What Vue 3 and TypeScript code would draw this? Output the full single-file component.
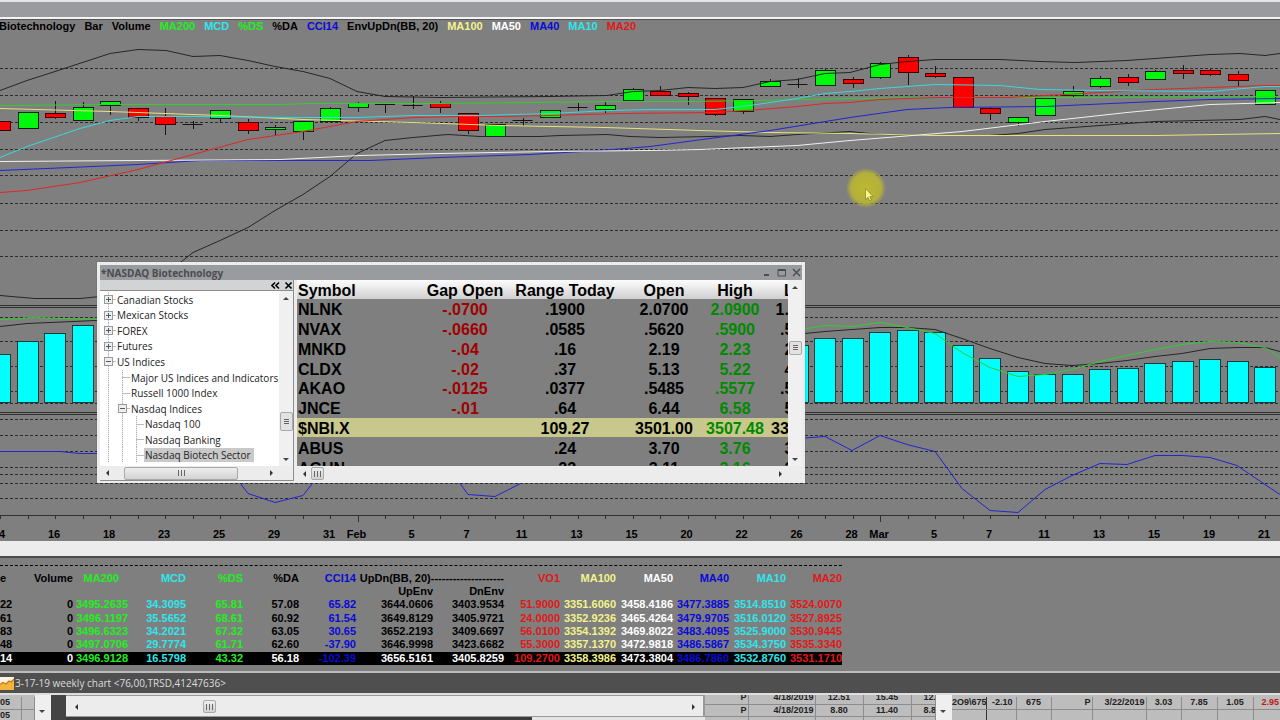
<script setup lang="ts">
import { ref } from 'vue'

type Tone = 'k' | 'g' | 'c' | 'b' | 'y' | 'w' | 'r'
type Points = [number, number][]

const STEP = 27.5

const legend: { text: string; tone: Tone }[] = [
  { text: 'Biotechnology', tone: 'k' },
  { text: 'Bar', tone: 'k' },
  { text: 'Volume', tone: 'k' },
  { text: 'MA200', tone: 'g' },
  { text: 'MCD', tone: 'c' },
  { text: '%DS', tone: 'g' },
  { text: '%DA', tone: 'k' },
  { text: 'CCI14', tone: 'b' },
  { text: 'EnvUpDn(BB, 20)', tone: 'k' },
  { text: 'MA100', tone: 'y' },
  { text: 'MA50', tone: 'w' },
  { text: 'MA40', tone: 'b' },
  { text: 'MA10', tone: 'c' },
  { text: 'MA20', tone: 'r' },
]

const grid = [68, 95, 122, 149, 175, 203, 230, 256, 317, 341, 366, 391, 403, 419, 435, 451, 467, 474, 483, 498]
const separators = [305, 307, 412, 414, 515]

// kind, body top, body bottom, wick top, wick bottom
type Candle = ['g' | 'r' | 'd', number, number, number, number]
const candles: Candle[] = [
  ['r', 121, 130, 121, 130], ['g', 112, 128, 112, 129], ['r', 113, 117, 101, 119],
  ['g', 107, 120, 102, 120], ['g', 101, 105, 101, 115], ['r', 108, 117, 108, 121],
  ['r', 116, 124, 108, 135], ['d', 124, 124, 121, 129], ['g', 110, 118, 110, 123],
  ['r', 122, 130, 119, 134], ['g', 127, 129, 125, 135], ['g', 121, 131, 121, 140],
  ['g', 108, 121, 107, 121], ['g', 103, 107, 102, 112], ['d', 104, 104, 104, 113],
  ['d', 105, 105, 96, 109], ['r', 103, 107, 101, 113], ['r', 113, 130, 113, 134],
  ['g', 124, 136, 124, 136], ['d', 120, 120, 118, 126], ['g', 110, 117, 110, 118],
  ['d', 107, 107, 103, 111], ['g', 105, 109, 102, 113], ['g', 89, 100, 88, 101],
  ['r', 91, 95, 86, 96], ['r', 93, 96, 92, 105], ['r', 98, 114, 98, 116],
  ['g', 99, 111, 99, 114], ['g', 81, 86, 79, 86], ['d', 84, 84, 78, 88],
  ['g', 70, 85, 69, 86], ['r', 79, 83, 77, 88], ['g', 63, 77, 62, 79],
  ['r', 57, 72, 55, 85], ['r', 73, 76, 66, 78], ['r', 77, 107, 77, 107],
  ['r', 108, 113, 107, 120], ['g', 117, 122, 117, 126], ['g', 98, 115, 97, 116],
  ['g', 91, 95, 86, 97], ['g', 78, 86, 76, 88], ['r', 77, 82, 74, 86],
  ['g', 71, 79, 70, 79], ['r', 70, 73, 65, 79], ['r', 70, 74, 69, 76],
  ['r', 74, 80, 71, 86], ['g', 90, 104, 90, 105],
]

const bars: [number, number][] = [
  [0, 354], [1, 341], [2, 333], [3, 325], [29, 345], [30, 338], [31, 338], [32, 332], [33, 330], [34, 332],
  [35, 345], [36, 358], [37, 371], [38, 374], [39, 374], [40, 369], [41, 368], [42, 363], [43, 361],
  [44, 359], [45, 361], [46, 367],
]

const lines: { tone: Tone; pts: Points }[] = [
  { tone: 'k', pts: [[0, 90], [27, 80], [55, 71], [110, 53], [138, 49], [166, 50], [193, 56], [220, 55], [248, 60], [275, 66], [303, 71], [330, 78], [357, 91], [385, 96], [440, 97], [550, 96], [607, 95], [633, 91], [660, 90], [688, 87], [715, 88], [743, 87], [770, 81], [797, 79], [825, 73], [850, 72], [880, 64], [907, 61], [935, 59], [1000, 59], [1040, 61], [1075, 62], [1127, 60], [1155, 58], [1182, 56], [1210, 54], [1240, 53], [1265, 55], [1280, 53]] },
  { tone: 'k', pts: [[0, 295], [35, 298], [80, 298], [110, 295], [165, 274], [193, 252], [220, 240], [248, 227], [275, 210], [303, 194], [330, 176], [357, 153], [385, 140], [413, 137], [448, 134], [480, 136], [540, 136], [560, 135], [607, 134], [630, 136], [660, 137], [710, 136], [740, 135], [770, 136], [797, 134], [850, 131], [880, 134], [935, 135], [990, 135], [1018, 133], [1045, 129], [1100, 125], [1155, 121], [1240, 119], [1265, 116], [1280, 119]] },
  { tone: 'g', pts: [[0, 105], [110, 104], [280, 104], [310, 103], [440, 103], [620, 101], [690, 101], [760, 100], [850, 98], [935, 97], [1100, 97], [1280, 96]] },
  { tone: 'y', pts: [[0, 108], [110, 111], [220, 115], [303, 119], [413, 122], [500, 125], [605, 127], [700, 130], [770, 132], [850, 133], [930, 135], [1010, 135], [1155, 135], [1280, 133]] },
  { tone: 'b', pts: [[0, 170], [70, 167], [138, 164], [200, 160], [370, 160], [440, 157], [530, 154], [600, 150], [650, 146], [710, 138], [770, 130], [850, 117], [907, 109], [950, 107], [1045, 106], [1155, 101], [1210, 99], [1280, 98]] },
  { tone: 'w', pts: [[0, 161], [140, 160], [280, 159], [360, 155], [440, 153], [550, 151], [650, 150], [700, 149], [797, 145], [850, 140], [962, 131], [1045, 121], [1127, 112], [1210, 104], [1280, 102]] },
  { tone: 'r', pts: [[0, 192], [27, 190], [80, 182], [138, 169], [193, 154], [248, 139], [303, 131], [357, 121], [413, 117], [460, 116], [500, 116], [550, 115], [620, 113], [715, 112], [760, 109], [797, 106], [825, 103], [850, 102], [880, 99], [935, 97], [1010, 97], [1045, 95], [1100, 92], [1155, 89], [1210, 87], [1265, 85], [1280, 85]] },
  { tone: 'c', pts: [[0, 157], [27, 146], [80, 128], [110, 120], [138, 116], [193, 116], [300, 117], [357, 117], [413, 115], [480, 115], [550, 113], [610, 110], [650, 109], [715, 109], [750, 105], [797, 98], [825, 93], [850, 91], [880, 88], [935, 84], [1000, 85], [1040, 89], [1100, 90], [1210, 91], [1265, 86], [1280, 86]] },
  { tone: 'k', pts: [[0, 326], [27, 323], [96, 320], [110, 320]] },
  { tone: 'g', pts: [[0, 319], [20, 318], [33, 317], [60, 318], [110, 319]] },
  { tone: 'k', pts: [[795, 334], [825, 331], [880, 327], [907, 327], [935, 329], [962, 338], [990, 348], [1018, 357], [1045, 363], [1072, 365], [1100, 363], [1127, 360], [1155, 356], [1182, 353], [1210, 348], [1237, 347], [1265, 347], [1280, 351]] },
  { tone: 'g', pts: [[795, 330], [825, 325], [852, 326], [880, 322], [907, 327], [935, 333], [962, 352], [990, 367], [1018, 376], [1045, 374], [1072, 369], [1100, 361], [1127, 355], [1155, 349], [1182, 344], [1210, 341], [1237, 342], [1265, 347], [1280, 357]] },
  { tone: 'b', pts: [[0, 451], [60, 451], [80, 453], [110, 453], [165, 440], [220, 456], [248, 493], [275, 502], [303, 495], [330, 460], [440, 455], [468, 494], [495, 496], [550, 468], [770, 440], [825, 436], [852, 450], [880, 435], [907, 444], [935, 451], [962, 488], [990, 510], [1018, 512], [1045, 489], [1072, 475], [1100, 463], [1127, 464], [1155, 455], [1182, 455], [1210, 457], [1237, 465], [1265, 484], [1280, 494]] },
]

const path = (pts: Points) => pts.map(([x, y]) => `${x},${y + 0.5}`).join(' ')

const axis: [number, string][] = [
  [0, '14'], [2, '16'], [4, '18'], [6, '23'], [8, '25'], [10, '29'], [12, '31'], [13, 'Feb'], [15, '5'],
  [17, '7'], [19, '11'], [21, '13'], [23, '15'], [25, '20'], [27, '22'], [29, '26'], [31, '28'], [32, 'Mar'],
  [34, '5'], [36, '7'], [38, '11'], [40, '13'], [42, '15'], [44, '19'], [46, '21'],
]
const isMonth = (i: number) => i === 13 || i === 32

interface Node { level: number; text: string; box?: '+' | '-' }
const tree: Node[] = [
  { level: 0, text: 'Canadian Stocks', box: '+' },
  { level: 0, text: 'Mexican Stocks', box: '+' },
  { level: 0, text: 'FOREX', box: '+' },
  { level: 0, text: 'Futures', box: '+' },
  { level: 0, text: 'US Indices', box: '-' },
  { level: 1, text: 'Major US Indices and Indicators' },
  { level: 1, text: 'Russell 1000 Index' },
  { level: 1, text: 'Nasdaq Indices', box: '-' },
  { level: 2, text: 'Nasdaq 100' },
  { level: 2, text: 'Nasdaq Banking' },
  { level: 2, text: 'Nasdaq Biotech Sector' },
]
const selected = ref('Nasdaq Biotech Sector')

const quoteHeads = ['Symbol', 'Gap Open', 'Range Today', 'Open', 'High', 'Low']
const quotes = [
  ['NLNK', '-.0700', '.1900', '2.0700', '2.0900', '1.9000'],
  ['NVAX', '-.0660', '.0585', '.5620', '.5900', '.5315'],
  ['MNKD', '-.04', '.16', '2.19', '2.23', '2.07'],
  ['CLDX', '-.02', '.37', '5.13', '5.22', '4.85'],
  ['AKAO', '-.0125', '.0377', '.5485', '.5577', '.5200'],
  ['JNCE', '-.01', '.64', '6.44', '6.58', '5.94'],
  ['$NBI.X', '', '109.27', '3501.00', '3507.48', '3398.21'],
  ['ABUS', '', '.24', '3.70', '3.76', '3.52'],
  ['AGUN', '', '.22', '3.11', '3.16', '2.94'],
]

const dataTones: Tone[] = ['k', 'k', 'g', 'c', 'g', 'k', 'b', 'k', 'k', 'r', 'y', 'w', 'b', 'c', 'r']
const dataRows = [
  ['22', '0', '3495.2635', '34.3095', '65.81', '57.08', '65.82', '3644.0606', '3403.9534', '51.9000', '3351.6060', '3458.4186', '3477.3885', '3514.8510', '3524.0070'],
  ['61', '0', '3496.1197', '35.5652', '68.61', '60.92', '61.54', '3649.8129', '3405.9721', '24.0000', '3352.9236', '3465.4264', '3479.9705', '3516.0120', '3527.8925'],
  ['83', '0', '3496.6323', '34.2021', '67.32', '63.05', '30.65', '3652.2193', '3409.6697', '56.0100', '3354.1392', '3469.8022', '3483.4095', '3525.9000', '3530.9445'],
  ['48', '0', '3497.0706', '29.7774', '61.71', '62.60', '-37.90', '3646.9998', '3423.6682', '55.3000', '3357.1370', '3472.9818', '3486.5867', '3534.3750', '3535.3340'],
  ['14', '0', '3496.9128', '16.5798', '43.32', '56.18', '-102.39', '3656.5161', '3405.8259', '109.2700', '3358.3986', '3473.3804', '3486.7860', '3532.8760', '3531.1710'],
]
</script>

<template>
  <main class="app">
    <div class="topbar"></div>

    <section class="chart">
      <div class="legend">
        <span v-for="l in legend" :key="l.text" :class="l.tone">{{ l.text }}</span>
      </div>
      <svg class="plot" viewBox="0 34 1280 507" role="img" aria-label="Nasdaq Biotechnology daily chart">
        <g class="grid">
          <line v-for="y in grid" :key="y" x1="0" x2="1280" :y1="y + 0.5" :y2="y + 0.5" />
        </g>
        <g class="seps">
          <line v-for="y in separators" :key="y" x1="0" x2="1280" :y1="y + 0.5" :y2="y + 0.5" />
        </g>
        <g class="bars">
          <rect v-for="[i, top] in bars" :key="i" :x="Math.round(i * STEP) - 10.5" :y="top + 0.5" width="21" :height="402 - top" />
        </g>
        <g v-for="(c, i) in candles" :key="i" class="candle" :class="'c-' + c[0]">
          <line :x1="Math.round(i * STEP) + 0.5" :x2="Math.round(i * STEP) + 0.5" :y1="c[3]" :y2="c[4]" />
          <line v-if="c[0] === 'd'" :x1="i * STEP - 10" :x2="i * STEP + 10" :y1="c[1] + 0.5" :y2="c[1] + 0.5" />
          <rect v-else :x="Math.round(i * STEP) - 9.5" :y="c[1] + 0.5" width="20" :height="c[2] - c[1]" />
        </g>
        <polyline v-for="(l, n) in lines" :key="n" class="series" :class="'s-' + l.tone" :points="path(l.pts)" />
        <g class="ticks">
          <line v-for="i in 47" :key="i" :x1="Math.round((i - 1) * STEP) + 0.5" :x2="Math.round((i - 1) * STEP) + 0.5" y1="515" :y2="isMonth(i - 1) ? 522 : 519" />
        </g>
        <text v-for="[i, t] in axis" :key="i" class="tick-label" :x="i * STEP - 1" y="538">{{ t }}</text>
        <defs>
          <radialGradient id="halo">
            <stop offset="0" stop-color="#bdb92f" />
            <stop offset="0.75" stop-color="#b3af3c" />
            <stop offset="1" stop-color="#b3af3c" stop-opacity="0" />
          </radialGradient>
        </defs>
        <circle cx="866" cy="188" r="20" fill="url(#halo)" />
        <path d="M865.500 188.500v11l2.500-2.300 1.700 3.600 1.700-.8-1.700-3.400h3.300z" fill="#fbf98a" stroke="#77732b" stroke-width=".6" />
      </svg>

      <section class="window" aria-label="NASDAQ Biotechnology">
        <header class="title">
          <h1>*NASDAQ Biotechnology</h1>
          <button aria-label="Minimize"><svg viewBox="0 0 9 9"><path d="M2 7h5" stroke-width="2" /></svg></button>
          <button aria-label="Maximize"><svg viewBox="0 0 9 9"><path d="M1 1.500h7.500v6.500h-7.500zM1 2.500h7" /></svg></button>
          <button aria-label="Close"><svg viewBox="0 0 9 9"><path d="M1 1l7 7M8 1l-7 7" stroke-width="1.400" /></svg></button>
        </header>
        <div class="panes">
          <div class="left">
            <div class="pane-head">
              <button aria-label="Collapse"><svg viewBox="0 0 9 9"><path d="M4 1.500l-3 3 3 3M8 1.500l-3 3 3 3" /></svg></button>
              <button aria-label="Close pane"><svg viewBox="0 0 9 9"><path d="M1.500 1.500l6 6M7.500 1.500l-6 6" /></svg></button>
            </div>
            <div class="tree-wrap">
              <ul class="tree">
                <li v-for="n in tree" :key="n.text">
                  <span v-for="g in n.level" :key="g" class="guide"></span>
                  <span class="guide tick">
                    <button v-if="n.box" class="box" :aria-label="(n.box === '+' ? 'Expand ' : 'Collapse ') + n.text">
                      <svg viewBox="0 0 9 9"><path :d="n.box === '+' ? 'M2 4.500h5M4.500 2v5' : 'M2 4.500h5'" /></svg>
                    </button>
                  </span>
                  <button class="node" :class="{ on: selected === n.text }" @click="selected = n.text">{{ n.text }}</button>
                </li>
              </ul>
              <div class="vbar">
                <button class="arr up" aria-label="Scroll tree up"></button>
                <i :style="{ flexGrow: 104 }"></i>
                <span class="thumb tall"></span>
                <i :style="{ flexGrow: 21 }"></i>
                <button class="arr down" aria-label="Scroll tree down"></button>
              </div>
            </div>
            <div class="hbar tree-h">
              <button class="arr lf" aria-label="Scroll tree left"></button>
              <i :style="{ flexGrow: 10 }"></i>
              <span class="thumb wide"></span>
              <i :style="{ flexGrow: 25 }"></i>
              <button class="arr rt" aria-label="Scroll tree right"></button>
            </div>
          </div>
          <div class="right">
            <div class="quote-wrap">
              <div class="quote-clip">
                <table class="quotes">
                  <thead>
                    <tr><th v-for="(h, i) in quoteHeads" :key="h" :class="'q' + i" scope="col">{{ h }}</th></tr>
                  </thead>
                  <tbody>
                    <tr v-for="q in quotes" :key="q[0]" :class="{ hot: q[0] === '$NBI.X' }">
                      <td v-for="(v, i) in q" :key="i" :class="'q' + i">{{ v }}</td>
                    </tr>
                  </tbody>
                </table>
              </div>
              <div class="vbar">
                <button class="arr up" aria-label="Scroll quotes up"></button>
                <i :style="{ flexGrow: 47 }"></i>
                <span class="thumb"></span>
                <i :style="{ flexGrow: 96 }"></i>
                <button class="arr down" aria-label="Scroll quotes down"></button>
              </div>
            </div>
            <div class="hbar quote-h">
              <button class="arr lf" aria-label="Scroll quotes left"></button>
              <span class="thumb"></span>
              <i :style="{ flexGrow: 1 }"></i>
              <button class="arr rt" aria-label="Scroll quotes right"></button>
            </div>
          </div>
        </div>
      </section>
    </section>

    <div class="strip"></div>

    <section class="data">
      <div class="rule"></div>
      <table class="values">
        <colgroup><col v-for="n in 15" :key="n" :class="'v' + n" /></colgroup>
        <thead>
          <tr>
            <th scope="col" class="start">e</th>
            <th scope="col">Volume</th>
            <th scope="col" class="g inset">MA200</th>
            <th scope="col" class="c">MCD</th>
            <th scope="col" class="g">%DS</th>
            <th scope="col">%DA</th>
            <th scope="col" class="b">CCI14</th>
            <th scope="colgroup" colspan="2">UpDn(BB, 20)--------------------</th>
            <th scope="col" class="r">VO1</th>
            <th scope="col" class="y">MA100</th>
            <th scope="col" class="w">MA50</th>
            <th scope="col" class="b">MA40</th>
            <th scope="col" class="c">MA10</th>
            <th scope="col" class="r">MA20</th>
          </tr>
          <tr>
            <td colspan="7"></td>
            <th scope="col">UpEnv</th>
            <th scope="col">DnEnv</th>
            <td colspan="6"></td>
          </tr>
        </thead>
        <tbody>
          <tr v-for="(row, n) in dataRows" :key="n" :class="{ last: n === 4 }">
            <td v-for="(v, i) in row" :key="i" :class="dataTones[i]">{{ v }}</td>
          </tr>
        </tbody>
      </table>
    </section>

    <header class="chartbar">
      <svg viewBox="0 0 14 13" aria-hidden="true">
        <rect width="14" height="13" fill="#fbf4e4" />
        <path d="M0 8l3-2 3 1 3-3 2 1 3-3v11H0z" fill="#f3b43c" />
        <path d="M0 7.500l3-2 3 1.500 3-3 2 1 3-3" fill="none" stroke="#c9780f" stroke-width="1.300" />
      </svg>
      <h2>3-17-19 weekly chart &lt;76,00,TRSD,41247636&gt;</h2>
    </header>

    <footer class="bottom">
      <div class="b-left">
        <table class="cells c-left"><tbody><tr><td>05</td><td></td></tr><tr><td>05</td><td></td></tr></tbody></table>
        <div class="b-scroll"><button class="arr down" aria-label="Scroll down"></button></div>
      </div>
      <div class="b-mid">
        <div class="hbar">
          <button class="arr lf" aria-label="Scroll left"></button>
          <i :style="{ flexGrow: 120 }"></i>
          <span class="thumb"></span>
          <i :style="{ flexGrow: 472 }"></i>
          <button class="arr rt" aria-label="Scroll right"></button>
        </div>
        <div class="under"><span></span></div>
      </div>
      <div class="b-opts">
        <table class="cells c-opts">
          <tbody>
            <tr><td>P</td><td>4/18/2019</td><td>12.51</td><td>15.45</td><td>12.51</td></tr>
            <tr><td>P</td><td>4/18/2019</td><td>8.80</td><td>11.40</td><td>8.80</td></tr>
            <tr><td></td><td></td><td></td><td></td><td></td></tr>
          </tbody>
        </table>
        <div class="b-scroll"><button class="arr down" aria-label="Scroll options down"></button></div>
      </div>
      <div class="b-pos">
        <table class="cells c-pos">
          <tbody>
            <tr><td>2O9\675</td><td>-2.10</td><td>675</td><td>P</td><td>3/22/2019</td><td>3.03</td><td>7.85</td><td>1.05</td><td>2.95</td></tr>
            <tr><td></td><td></td><td></td><td></td><td></td><td></td><td></td><td></td><td></td></tr>
          </tbody>
        </table>
      </div>
    </footer>
  </main>
</template>

<style>
body {
  margin: 0;
  background: #7f7f7f;
}
</style>

<style scoped>
* {
  box-sizing: border-box;
}
.app {
  min-height: 100vh;
  overflow: hidden;
  background: #7f7f7f;
  color: #000;
  font-family: "Liberation Sans", Arial, sans-serif;
}
button {
  padding: 0;
  border: 0;
  background: none;
  color: inherit;
  font: inherit;
}
h1,
h2 {
  margin: 0;
}
table {
  border-collapse: collapse;
  table-layout: fixed;
}
th,
td {
  padding: 0;
}
.k { color: #000; }
.g { color: #1ef01e; }
.c { color: #2ee6ec; }
.b { color: #0a0ad8; }
.y { color: #f3f38a; }
.w { color: #fff; }
.r { color: #e01818; }

.topbar {
  height: 19px;
  border-top: 2px solid #e4e6e8;
  border-bottom: 2px solid #f4f4f4;
  background: #999b9f;
}
.chart {
  position: relative;
}
.legend {
  display: flex;
  gap: 9px;
  height: 15px;
  margin-left: -1px;
  border-top: 1px solid #555;
  font-size: 11px;
  font-weight: bold;
  line-height: 12px;
  white-space: nowrap;
}
.plot {
  display: block;
  width: 100%;
  height: auto;
}
.grid line {
  stroke: #2b2b2b;
  stroke-dasharray: 3 2;
}
.seps line,
.ticks line {
  stroke: #303030;
}
.bars rect {
  fill: #0ff;
  stroke: #143c3c;
}
.candle line {
  stroke: #151515;
}
.candle rect {
  stroke: #102010;
}
.c-g rect { fill: #00f80c; }
.c-r rect { fill: #fb0000; stroke: #3a0000; }
.series {
  fill: none;
}
.s-k { stroke: #262626; }
.s-g { stroke: #2fd02f; }
.s-c { stroke: #38d8de; }
.s-b { stroke: #2424d0; }
.s-y { stroke: #e6e27c; }
.s-w { stroke: #f0f0f0; }
.s-r { stroke: #e02626; }
.tick-label {
  font-size: 11px;
  font-weight: bold;
  text-anchor: middle;
}

.window {
  position: absolute;
  left: 97px;
  top: 243px;
  width: 708px;
  border: 3px solid #ececec;
  border-bottom-width: 2px;
  background: #ececec;
  box-shadow: 0 0 1px #555;
}
.title {
  display: flex;
  align-items: center;
  gap: 6px;
  height: 15px;
  padding: 0 1px;
  background: #999b9f;
  color: #4c4c4e;
}
.title h1 {
  flex: 1;
  font: bold 10px/14px "Open Sans", "Noto Sans", sans-serif;
}
.title button,
.pane-head button {
  width: 9px;
  height: 9px;
}
.title svg,
.pane-head svg,
.box svg {
  display: block;
  fill: none;
  stroke: currentColor;
}
.panes {
  display: flex;
}
.left {
  width: 194px;
  border-right: 1px solid #8d8d8d;
}
.pane-head {
  display: flex;
  justify-content: flex-end;
  align-items: center;
  gap: 4px;
  height: 11px;
  border-bottom: 1px solid #8d8d8d;
  background: #d2d3d5;
}
.pane-head svg {
  stroke-width: 1.6;
}
.tree-wrap {
  display: flex;
  height: 175px;
  background: #fff;
}
.tree {
  display: flex;
  flex: 1;
  flex-direction: column;
  height: 172px;
  min-width: 0;
  margin: 0;
  padding: 1px 0 0 2px;
  overflow: hidden;
  list-style: none;
  color: #222;
  font: 10px/14px "Open Sans", "Noto Sans", sans-serif;
  white-space: nowrap;
}
.tree li {
  display: flex;
  flex: 1;
  align-items: center;
}
.guide {
  display: flex;
  align-items: center;
  flex: none;
  width: 14px;
  height: 100%;
  padding-left: 2px;
  background: repeating-linear-gradient(#b5b5b5 0 1px, #e8e8e8 1px 2px) 6px 0 / 1px 100% no-repeat;
}
.tick {
  background:
    linear-gradient(#bbb, #bbb) 6px 50% / 8px 1px no-repeat,
    repeating-linear-gradient(#b5b5b5 0 1px, #e8e8e8 1px 2px) 6px 0 / 1px 100% no-repeat;
}
.box {
  width: 9px;
  height: 9px;
  outline: 1px solid #9a9a9a;
  outline-offset: -1px;
  background: #eee;
  color: #4a5a78;
}
.node {
  padding: 0 1px;
}
.on {
  padding-right: 3px;
  background: #c9c9c9;
}
.vbar {
  display: flex;
  flex: none;
  flex-direction: column;
  align-items: center;
  width: 14px;
  background: #f0f0f0;
}
.hbar {
  display: flex;
  align-items: center;
  height: 15px;
  background: #ececec;
}
.arr {
  flex: none;
  width: 14px;
  height: 14px;
}
.arr::before {
  content: "";
  display: block;
  width: 0;
  height: 0;
  margin: auto;
  border: 3px solid transparent;
}
.up::before { border-bottom-color: #444; border-top-width: 0; }
.down::before { border-top-color: #444; border-bottom-width: 0; }
.lf::before { border-right-color: #333; border-left-width: 0; }
.rt::before { border-left-color: #333; border-right-width: 0; }
.thumb {
  flex: none;
  width: 13px;
  height: 14px;
  border: 1px solid #a9a9a9;
  border-radius: 2px;
  background: linear-gradient(#666, #666) 3px 3px / 5px 1px no-repeat,
    linear-gradient(#666, #666) 3px 5px / 5px 1px no-repeat,
    linear-gradient(#666, #666) 3px 7px / 5px 1px no-repeat, #e2e2e2;
}
.tall {
  height: 19px;
  background-position: 3px 6px, 3px 8px, 3px 10px, 0 0;
}
.hbar .thumb {
  height: 13px;
  background: linear-gradient(#666, #666) calc(50% - 3px) 50% / 1px 6px no-repeat,
    linear-gradient(#666, #666) 50% 50% / 1px 6px no-repeat,
    linear-gradient(#666, #666) calc(50% + 3px) 50% / 1px 6px no-repeat, linear-gradient(#eee, #d2d2d2);
}
.hbar .wide {
  width: 114px;
}
.tree-h {
  padding-right: 15px;
  border-bottom: 1px solid #8d8d8d;
}
.quote-h {
  padding-right: 15px;
}
.right {
  flex: 1;
  min-width: 0;
  padding-left: 3px;
}
.quote-wrap {
  display: flex;
  height: 186px;
}
.quote-clip {
  flex: 1;
  min-width: 0;
  overflow: hidden;
  background: #7f7f7f;
}
.quotes {
  width: 539px;
  height: 197px;
  font-size: 16px;
  font-weight: bold;
  text-align: center;
  white-space: nowrap;
}
.quotes td,
.quotes th {
  padding-top: 2px;
  line-height: 17px;
}
.quotes thead {
  background: linear-gradient(#fdfdfd, #cfcfcf);
}
.q0 { width: 125px; padding-left: 1px; text-align: left; }
.q1 { width: 86px; }
.q2 { width: 114px; }
.q3 { width: 84px; }
.q4 { width: 58px; }
.q5 { width: 72px; }
td.q1 { color: #a00000; }
td.q4 { color: #008a00; }
.hot {
  background: #c8c78c;
}

.strip {
  height: 17px;
  border-bottom: 2px solid #4a4a4a;
  background: #ececec;
}
.data {
  height: 113px;
  padding-top: 7px;
  font-size: 11px;
  font-weight: bold;
  line-height: 13px;
}
.rule {
  width: 842px;
  height: 7px;
  border-top: 1px dashed #000;
}
.values {
  width: 842px;
  height: 93px;
  text-align: right;
  white-space: nowrap;
}
.v1 { width: 11px; }
.v2 { width: 62px; }
.v3 { width: 55px; }
.v4 { width: 58px; }
.v5 { width: 57px; }
.v6 { width: 56px; }
.v7 { width: 57px; }
.v8 { width: 77px; }
.v9 { width: 71px; }
.v10 { width: 56px; }
.v11 { width: 56px; }
.v12 { width: 57px; }
.v13 { width: 56px; }
.v14 { width: 57px; }
.v15 { width: 56px; }
.inset {
  padding-right: 9px;
}
.start {
  text-align: left;
}
.last {
  background: #000;
}
.last .k {
  color: #fff;
}

.chartbar {
  display: flex;
  align-items: center;
  gap: 1px;
  height: 24px;
  border-top: 2px solid #bcbcbc;
  border-bottom: 2px solid #dedede;
  background: #4f4f4f;
  color: #dcdcdc;
}
.chartbar svg {
  flex: none;
  width: 14px;
  height: 13px;
}
.chartbar h2 {
  font: 10px/18px "Open Sans", "Noto Sans", sans-serif;
  white-space: nowrap;
}
.bottom {
  display: flex;
  height: 25px;
  overflow: hidden;
  background: #bdbdbd;
}
.b-left,
.b-opts {
  display: flex;
  flex: none;
  overflow: hidden;
}
.b-left {
  width: 51px;
}
.b-scroll {
  flex: none;
  width: 16px;
  padding-top: 9px;
  background: #efefef;
}
.b-mid {
  flex: 1;
  min-width: 200px;
  border-left: 15px solid #444;
}
.b-mid .hbar {
  height: 22px;
  padding: 2px 3px 1px;
  border: 1px solid #999;
  border-width: 1px 2px 1px 0;
}
.under {
  display: flex;
  height: 3px;
  background: #e4e4e4;
}
.under span {
  width: 73%;
  background: #3c3c3c;
}
.b-opts {
  width: 247px;
}
.b-pos {
  flex: none;
  width: 328px;
  overflow: hidden;
}
.cells {
  color: #222;
  font: bold 9px/11px "Liberation Sans", Arial, sans-serif;
  text-align: center;
  white-space: nowrap;
}
.cells td {
  height: 12px;
  overflow: hidden;
  border: 1px solid #8c8c8c;
  border-width: 0 1px 1px 0;
}
.c-left {
  width: 35px;
  margin-top: 2px;
}
.c-left td:first-child {
  width: 21px;
  text-align: left;
}
.c-opts {
  width: 231px;
  margin-top: -3px;
}
.c-opts td:nth-child(1) { width: 43px; padding-right: 1px; text-align: right; }
.c-opts td:nth-child(2) { width: 67px; padding-right: 1px; text-align: right; }
.c-opts td:nth-child(3) { width: 48px; }
.c-opts td:nth-child(4) { width: 48px; }
.c-opts td:nth-child(5) { padding-left: 12px; text-align: left; }
.c-pos {
  width: 340px;
  margin-top: 2px;
}
.c-pos td:nth-child(1) { width: 34px; border-right-color: #333; text-align: right; }
.c-pos td:nth-child(2) { width: 30px; padding-right: 3px; text-align: right; }
.c-pos td:nth-child(3) { width: 35px; }
.c-pos td:nth-child(4) { width: 41px; padding-right: 1px; text-align: right; }
.c-pos td:nth-child(5) { width: 54px; padding-right: 1px; text-align: right; }
.c-pos td:nth-child(6) { width: 35px; }
.c-pos td:nth-child(7) { width: 36px; }
.c-pos td:nth-child(8) { width: 36px; }
.c-pos td:nth-child(9) { padding-left: 8px; color: #c01818; text-align: left; }
</style>
